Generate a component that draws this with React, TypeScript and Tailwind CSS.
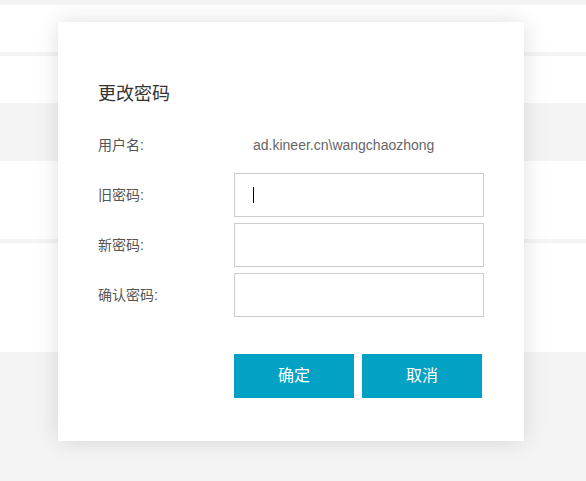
const font = 'font-["Liberation_Sans","Noto_Sans_CJK_SC",sans-serif]';

function Field({ label, caret }: { label: string; caret?: boolean }) {
  return (
    <>
      <div className="flex items-center text-[14px] text-[#555]">{label}</div>
      <div className="h-[44px] border border-[#cccccc] bg-white flex items-center pl-[18px]">
        {caret && <span className="block w-px h-[16px] bg-black" />}
      </div>
    </>
  );
}

export default function App() {
  return (
    <div className={`relative h-[481px] w-[586px] overflow-hidden bg-[#f4f4f4] ${font}`}>
      {/* background list behind the dialog */}
      <div className="flex flex-col pt-[5px]">
        <div className="h-[47px] bg-white" />
        <div className="h-[4px]" />
        <div className="h-[47px] bg-white" />
        <div className="h-[58px]" />
        <div className="h-[78px] bg-white" />
        <div className="h-[4px]" />
        <div className="h-[109px] bg-white" />
      </div>

      {/* dialog */}
      <div className="absolute left-[58px] top-[22px] w-[466px] h-[419px] bg-white shadow-[0_0_22px_rgba(0,0,0,0.13)] pl-[40px] pt-[60px]">
        <h2 className="text-[18px] leading-[24px] text-[#333]">更改密码</h2>

        <div className="mt-[17px] grid grid-cols-[136px_250px] gap-y-[6px]">
          <div className="h-[44px] flex items-center text-[14px] text-[#555]">用户名:</div>
          <div className="flex items-center pl-[19px] text-[14px] text-[#666]">ad.kineer.cn\wangchaozhong</div>
          <Field label="旧密码:" caret />
          <Field label="新密码:" />
          <Field label="确认密码:" />
        </div>

        <div className="mt-[37px] ml-[136px] flex gap-[8px]">
          <button className="w-[120px] h-[44px] bg-[#03a1c4] text-white text-[16px]">确定</button>
          <button className="w-[120px] h-[44px] bg-[#03a1c4] text-white text-[16px]">取消</button>
        </div>
      </div>
    </div>
  );
}
